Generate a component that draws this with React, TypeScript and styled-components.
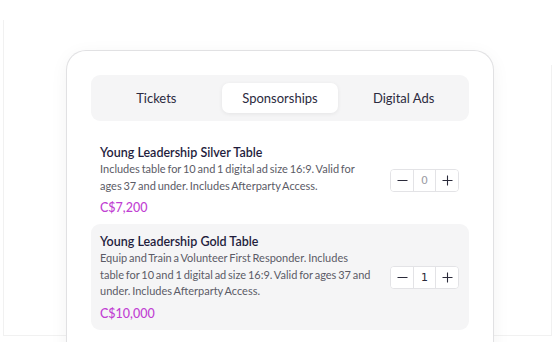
import { useState } from 'react'
import styled, { createGlobalStyle, css } from 'styled-components'

const Colors = {
	Ink: '#1f1d3d',
	Text: '#5b5b66',
	Price: '#c13fd3',
	Muted: '#f5f5f6',
	Line: '#e3e3e6',
}

const GlobalStyle = createGlobalStyle`
	html, body {
		margin: 0;
		background: #ffffff;
		font-family: Lato, 'Noto Sans', sans-serif;
		-webkit-font-smoothing: antialiased;
	}
`

type Item = {
	title: string
	description: string
	price: string
	qty: number
}

const ITEMS: Item[] = [
	{
		title: 'Young Leadership Silver Table',
		description:
			'Includes table for 10 and 1 digital ad size 16:9. Valid for ages 37 and under. Includes Afterparty Access.',
		price: 'C$7,200',
		qty: 0,
	},
	{
		title: 'Young Leadership Gold Table',
		description:
			'Equip and Train a Volunteer First Responder. Includes table for 10 and 1 digital ad size 16:9. Valid for ages 37 and under. Includes Afterparty Access.',
		price: 'C$10,000',
		qty: 1,
	},
]

const TABS = ['Tickets', 'Sponsorships', 'Digital Ads']

export default function App() {
	const [tab, setTab] = useState(1)
	const [qty, setQty] = useState(ITEMS.map((i) => i.qty))

	const change = (idx: number, delta: number) => {
		setQty((prev) => prev.map((q, i) => (i === idx ? Math.max(0, q + delta) : q)))
	}

	return (
		<>
			<GlobalStyle />
			<Stage>
				<Backdrop>
					<Card>
						<TabBar>
							{TABS.map((t, i) => (
								<Tab key={t} $active={i === tab} onClick={() => setTab(i)}>
									{t}
								</Tab>
							))}
						</TabBar>
						<List>
							{ITEMS.map((item, i) => (
								<Row key={item.title} $selected={qty[i] > 0}>
									<Info>
										<Title>{item.title}</Title>
										<Description>{item.description}</Description>
										<Price>{item.price}</Price>
									</Info>
									<Stepper>
										<StepButton onClick={() => change(i, -1)} aria-label="decrease">
											<svg width="11" height="11" viewBox="0 0 11 11">
												<path d="M0.5 5.5h10" stroke="#2a2a3a" strokeWidth="1.1" />
											</svg>
										</StepButton>
										<Count $zero={qty[i] === 0}>{qty[i]}</Count>
										<StepButton onClick={() => change(i, 1)} aria-label="increase">
											<svg width="11" height="11" viewBox="0 0 11 11">
												<path d="M0.5 5.5h10M5.5 0.5v10" stroke="#2a2a3a" strokeWidth="1.1" />
											</svg>
										</StepButton>
									</Stepper>
								</Row>
							))}
						</List>
					</Card>
				</Backdrop>
			</Stage>
		</>
	)
}

const Stage = styled.div`
	width: 558px;
	height: 342px;
	overflow: hidden;
	padding: 20px 0 0 3px;
	box-sizing: border-box;
`
const Backdrop = styled.div`
	position: relative;
	width: 549px;
	height: 316px;
	padding: 30px 0 0 62px;
	box-sizing: border-box;
	border-left: 1px solid #f1f1f1;
	border-bottom: 1px solid #f1f1f1;
	&::after {
		content: '';
		position: absolute;
		right: 0;
		top: 45px;
		bottom: 0;
		border-right: 1px solid #f1f1f1;
	}
`
const Card = styled.div`
	width: 428px;
	height: 320px;
	box-sizing: border-box;
	padding: 24px 24px 0;
	background: #ffffff;
	border: 1px solid #e1e1e3;
	border-bottom: none;
	border-radius: 20px 20px 0 0;
	box-shadow: 0 4px 18px rgba(0, 0, 0, 0.05);
`
const TabBar = styled.div`
	display: grid;
	grid-template-columns: repeat(3, 1fr);
	gap: 7px;
	padding: 8px 7px;
	background: ${Colors.Muted};
	border-radius: 9px;
`
const Tab = styled.button<{ $active?: boolean }>`
	height: 30px;
	border: none;
	border-radius: 7px;
	background: transparent;
	font-family: inherit;
	font-size: 13px;
	font-weight: 400;
	color: #2b2a40;
	cursor: pointer;
	${({ $active }) =>
		$active &&
		css`
			background: #ffffff;
			box-shadow: 0 1px 4px rgba(0, 0, 0, 0.07);
		`}
`
const List = styled.div`
	display: flex;
	flex-direction: column;
	margin-top: 14px;
`
const Row = styled.div<{ $selected?: boolean }>`
	display: flex;
	align-items: center;
	justify-content: space-between;
	padding: 9px 10px 8px 9px;
	border-radius: 9px;
	background: ${({ $selected }) => ($selected ? Colors.Muted : 'transparent')};
`
const Info = styled.div`
	width: 273px;
`
const Title = styled.div`
	font-size: 12.5px;
	line-height: 17px;
	font-weight: 600;
	color: ${Colors.Ink};
`
const Description = styled.div`
	font-size: 11px;
	line-height: 16.5px;
	word-spacing: -1px;
	color: ${Colors.Text};
`
const Price = styled.div`
	margin-top: 5px;
	font-size: 12.5px;
	line-height: 17px;
	font-weight: 500;
	color: ${Colors.Price};
`
const Stepper = styled.div`
	display: flex;
	height: 21px;
	border: 1px solid ${Colors.Line};
	border-radius: 4px;
	background: #ffffff;
	overflow: hidden;
`
const StepButton = styled.button`
	width: 22px;
	display: flex;
	align-items: center;
	justify-content: center;
	padding: 0;
	border: none;
	background: #ffffff;
	cursor: pointer;
`
const Count = styled.div<{ $zero?: boolean }>`
	width: 21px;
	display: flex;
	align-items: center;
	justify-content: center;
	border-left: 1px solid ${Colors.Line};
	border-right: 1px solid ${Colors.Line};
	font-family: 'DejaVu Sans', sans-serif;
	font-size: 11px;
	color: ${({ $zero }) => ($zero ? '#9a9aa3' : '#2a2a3a')};
`
